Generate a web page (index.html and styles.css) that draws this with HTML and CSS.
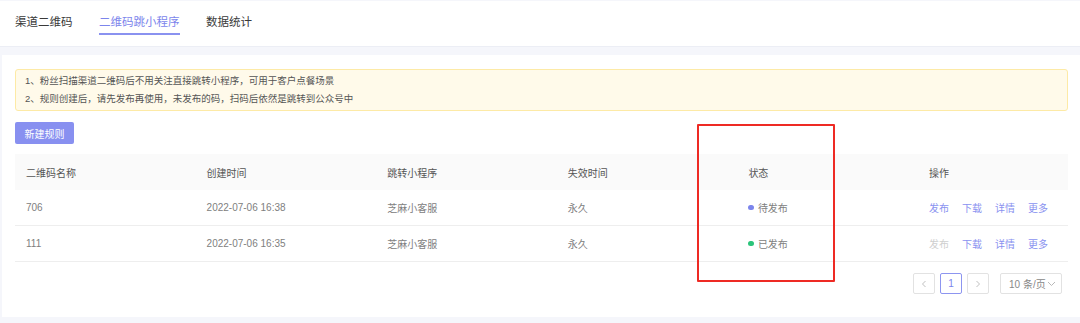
FILE: index.html
```html
<!DOCTYPE html>
<html lang="zh">
<head>
<meta charset="utf-8">
<title>二维码跳小程序</title>
<link rel="stylesheet" href="styles.css">
</head>
<body>
<div class="topbar">
  <div class="tabs">
    <div class="tab">渠道二维码</div>
    <div class="tab active">二维码跳小程序</div>
    <div class="tab">数据统计</div>
  </div>
</div>
<div class="card">
  <div class="tip">
    <div>1、粉丝扫描渠道二维码后不用关注直接跳转小程序，可用于客户点餐场景</div>
    <div>2、规则创建后，请先发布再使用，未发布的码，扫码后依然是跳转到公众号中</div>
  </div>
  <button class="btn-primary">新建规则</button>
  <div class="table">
    <div class="row head">
      <div class="cell">二维码名称</div>
      <div class="cell">创建时间</div>
      <div class="cell">跳转小程序</div>
      <div class="cell">失效时间</div>
      <div class="cell">状态</div>
      <div class="cell">操作</div>
    </div>
    <div class="row">
      <div class="cell">706</div>
      <div class="cell">2022-07-06 16:38</div>
      <div class="cell">芝麻小客服</div>
      <div class="cell">永久</div>
      <div class="cell"><span class="dot dot-pending"></span>待发布</div>
      <div class="cell ops"><span class="op">发布</span><span class="op">下载</span><span class="op">详情</span><span class="op">更多</span></div>
    </div>
    <div class="row">
      <div class="cell">111</div>
      <div class="cell">2022-07-06 16:35</div>
      <div class="cell">芝麻小客服</div>
      <div class="cell">永久</div>
      <div class="cell"><span class="dot dot-done"></span>已发布</div>
      <div class="cell ops"><span class="op disabled">发布</span><span class="op">下载</span><span class="op">详情</span><span class="op">更多</span></div>
    </div>
  </div>
  <div class="pager">
    <div class="pbtn"><svg width="8" height="8" viewBox="0 0 8 8"><path d="M5.5 1 L2.5 4 L5.5 7" fill="none" stroke="#c0c0c0" stroke-width="1"/></svg></div>
    <div class="pbtn current">1</div>
    <div class="pbtn"><svg width="8" height="8" viewBox="0 0 8 8"><path d="M2.5 1 L5.5 4 L2.5 7" fill="none" stroke="#c0c0c0" stroke-width="1"/></svg></div>
    <div class="psize"><span class="psize-text">10 条/页</span><svg width="9" height="6" viewBox="0 0 9 6"><path d="M1 1 L4.5 4.5 L8 1" fill="none" stroke="#b8b8b8" stroke-width="1"/></svg></div>
  </div>
</div>
<div class="annot"></div>
</body>
</html>
```
FILE: styles.css
```css
* { box-sizing: border-box; }
html, body { margin: 0; padding: 0; }
body {
  width: 1080px;
  height: 323px;
  overflow: hidden;
  background: #f5f6fb;
  font-family: "Liberation Sans", "Noto Sans CJK SC", sans-serif;
  color: #666;
  position: relative;
  padding-top: 1px;
}
.topbar {
  background: #fff;
  height: 46px;
  border-bottom: 1px solid #eceef5;
}
.tabs {
  display: flex;
  gap: 26.5px;
  padding-left: 15px;
  height: 100%;
}
.tab {
  font-size: 11.5px;
  color: #3a3a3a;
  padding-top: 12px;
  height: 34px;
  line-height: 18px;
  border-bottom: 2px solid transparent;
}
.tab.active {
  color: #7c85ec;
  border-bottom-color: #8a92f0;
}
.card {
  background: #fff;
  margin-top: 8px;
  margin-left: 2px;
  height: 262px;
  padding: 14px 12px 0 13px;
}
.tip {
  background: #fffaea;
  border: 1px solid #fdeaa6;
  border-radius: 3px;
  padding: 2px 9px 3px;
  font-size: 9.5px;
  line-height: 17.5px;
  color: #555;
}
.btn-primary {
  display: block;
  margin-top: 11px;
  width: 59px;
  height: 22px;
  border: none;
  border-radius: 2px;
  background: #8890f0;
  color: #fff;
  font-family: inherit;
  font-size: 10px;
  padding: 0;
}
.table {
  margin-top: 10px;
}
.row {
  display: grid;
  grid-template-columns: 180.6px 180.6px 180.6px 180.6px 180.6px 1fr;
  height: 36px;
  align-items: center;
  border-bottom: 1px solid #eeeeee;
  font-size: 10px;
  color: #808080;
}
.row.head {
  background: #fafafa;
  border-bottom: none;
  color: #555;
}
.cell {
  padding-left: 11px;
  display: flex;
  align-items: center;
  white-space: nowrap;
}
.dot {
  display: inline-block;
  width: 5.5px;
  height: 5.5px;
  border-radius: 50%;
  margin-right: 4px;
}
.dot-pending { background: #7c85ec; }
.dot-done { background: #2bc47a; }
.ops { gap: 13px; }
.op { color: #8a92f0; }
.op.disabled { color: #cfcfcf; }
.pager {
  display: flex;
  justify-content: flex-end;
  align-items: center;
  margin-top: 11px;
  padding-right: 6px;
  gap: 5px;
}
.pbtn {
  width: 22px;
  height: 21px;
  border: 1px solid #e2e2e2;
  border-radius: 2px;
  display: flex;
  align-items: center;
  justify-content: center;
  font-size: 10px;
  color: #999;
}
.pbtn.current {
  border-color: #8d95f0;
  color: #7c85ec;
}
.psize {
  margin-left: 6px;
  width: 62px;
  height: 21px;
  border: 1px solid #e2e2e2;
  border-radius: 2px;
  display: flex;
  align-items: center;
  padding-left: 8px;
  gap: 1px;
  font-size: 10px;
  color: #888;
}
.psize-text { white-space: pre; }
.annot {
  position: absolute;
  left: 697px;
  top: 124px;
  width: 138px;
  height: 158px;
  border: 2px solid #ee2a24;
  border-radius: 1px;
}
```
